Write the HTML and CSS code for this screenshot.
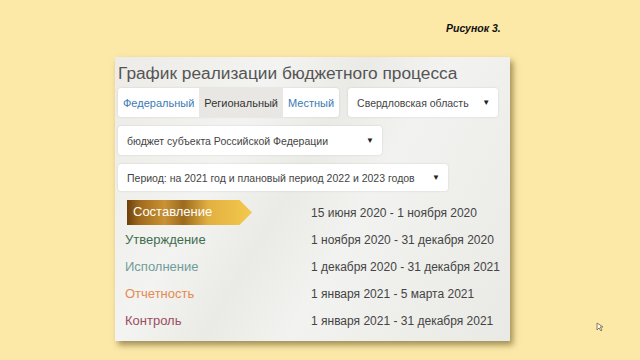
FILE: index.html
```html
<!DOCTYPE html>
<html lang="ru">

<head>
    <meta charset="UTF-8">
    <meta name="viewport" content="width=device-width, initial-scale=1.0">
    <title>График реализации бюджетного процесса</title>
    <link rel="stylesheet" href="styles.css">
</head>

<body>
    <div class="slide">
        <p class="caption">Рисунок 3.</p>

        <div class="card">
            <h1>График реализации бюджетного процесса</h1>

            <div class="row">
                <div class="tabs">
                    <span class="tab">Федеральный</span>
                    <span class="tab active">Региональный</span>
                    <span class="tab">Местный</span>
                </div>
                <div class="select region">Свердловская область <span class="caret">▼</span></div>
            </div>

            <div class="row">
                <div class="select budget">бюджет субъекта Российской Федерации <span class="caret">▼</span></div>
            </div>

            <div class="row">
                <div class="select period">Период: на 2021 год и плановый период 2022 и 2023 годов <span class="caret">▼</span></div>
            </div>

            <!-- этапы и сроки -->
            <div class="stages">
                <div class="stage current">Составление</div>
                <div class="dates">15 июня 2020 - 1 ноября 2020</div>

                <div class="stage green">Утверждение</div>
                <div class="dates">1 ноября 2020 - 31 декабря 2020</div>

                <div class="stage teal">Исполнение</div>
                <div class="dates">1 декабря 2020 - 31 декабря 2021</div>

                <div class="stage orange">Отчетность</div>
                <div class="dates">1 января 2021 - 5 марта 2021</div>

                <div class="stage maroon">Контроль</div>
                <div class="dates">1 января 2021 - 31 декабря 2021</div>
            </div>
        </div>

        <svg class="cursor" width="8" height="10" viewBox="0 0 8 10">
            <path d="M1 1 L1 8 L3 6 L5 9 L6 8 L4 5 L7 5 Z" fill="#fff" stroke="#8a7a5a" stroke-width="1"/>
        </svg>
    </div>
</body>

</html>
```

FILE: styles.css
```css
body {
    margin: 0;
    background: #fce8a7;
    font-family: "Liberation Sans", Arial, sans-serif;
}

.slide {
    position: relative;
    width: 640px;
    height: 360px;
    padding-top: 20px;
    box-sizing: border-box;
}

.caption {
    margin: 0 0 0 446px;
    height: 37px;
    font-size: 10.5px;
    font-weight: bold;
    font-style: italic;
    color: #111;
    line-height: 16px;
}

.card {
    margin-left: 115px;
    width: 395px;
    height: 284px;
    box-sizing: border-box;
    padding: 3px 0 0 3px;
    background: linear-gradient(120deg, #ecebe7 0%, #f3f3f1 30%, #eaeae6 45%, #f2f2f0 60%, #e9e9e5 100%);
    box-shadow: 3px 4px 6px rgba(90, 70, 20, 0.55);
}

h1 {
    margin: 0;
    font-size: 17.3px;
    font-weight: normal;
    color: #555;
    line-height: 26px;
}

.row {
    display: flex;
    align-items: center;
    gap: 9px;
    margin-top: 2px;
}

.row + .row {
    margin-top: 9px;
}

.tabs {
    display: flex;
    height: 29px;
    background: #fff;
    border-radius: 3px;
    box-shadow: 0 0 2px rgba(0, 0, 0, 0.15);
    overflow: hidden;
}

.tab {
    display: flex;
    align-items: center;
    padding: 0 5px;
    font-size: 11px;
    color: #3b7bb5;
}

.tab.active {
    background: #e8e7e3;
    color: #333;
}

.select {
    display: flex;
    align-items: center;
    justify-content: space-between;
    height: 29px;
    box-sizing: border-box;
    padding: 0 8px 0 9px;
    background: #fff;
    border-radius: 3px;
    box-shadow: 0 0 2px rgba(0, 0, 0, 0.15);
    font-size: 10.5px;
    color: #444;
}

.caret {
    font-size: 8px;
    color: #222;
}

.region {
    width: 150px;
}

.budget {
    width: 264px;
}

.period {
    width: 330px;
    height: 27px;
}

.stages {
    display: grid;
    grid-template-columns: 186px 1fr;
    grid-auto-rows: 27px;
    align-items: center;
    margin-top: 8px;
    padding-left: 7px;
    font-size: 13px;
}

.stage.current {
    width: 125px;
    height: 25px;
    margin-left: 2px;
    box-sizing: border-box;
    padding: 4px 0 0 6px;
    color: #fff;
    background: linear-gradient(90deg, #6e3f0c 0%, #a06a1c 10%, #c99234 30%, #9a6a1e 45%, #e2b040 65%, #f4c94e 100%);
    clip-path: polygon(0 0, 90% 0, 100% 50%, 90% 100%, 0 100%);
}

.dates {
    font-size: 12px;
    color: #444;
}

.green {
    color: #3e6e4e;
}

.teal {
    color: #6f9d9b;
}

.orange {
    color: #e58a52;
}

.maroon {
    color: #9b4d5f;
}

.cursor {
    position: absolute;
    left: 596px;
    top: 322px;
}
```
